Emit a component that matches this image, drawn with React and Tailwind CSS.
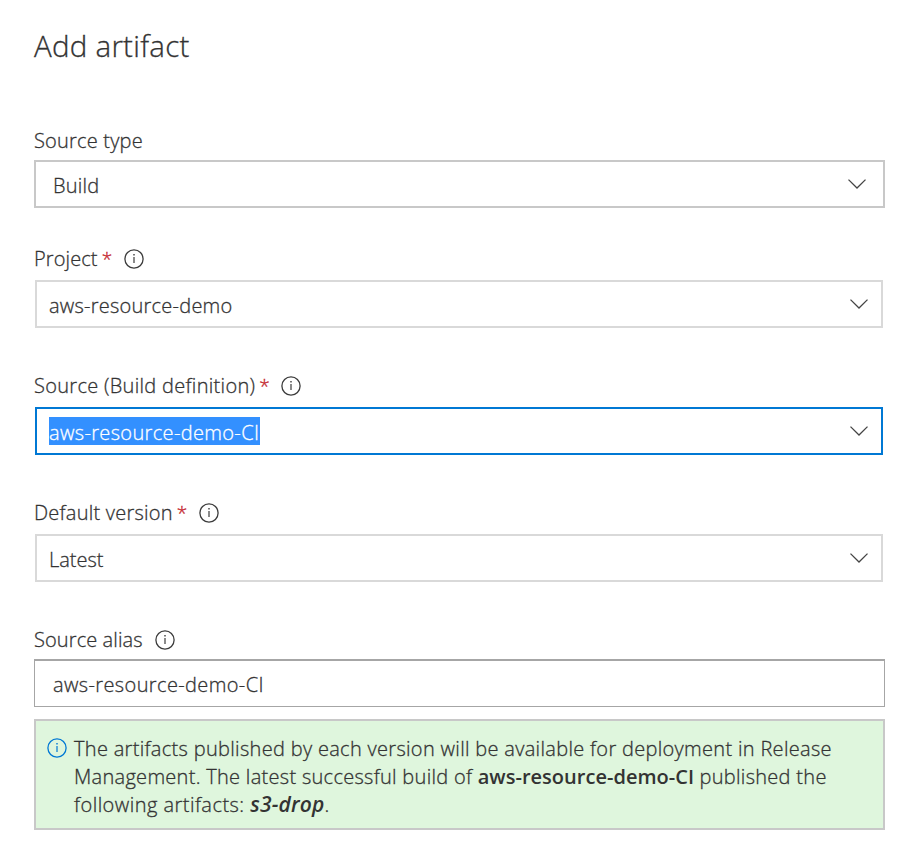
import React from "react";

function InfoIcon({ className }) {
  return (
    <svg viewBox="0 0 20 20" className={`h-5 w-5 shrink-0 ${className}`} fill="none" stroke="currentColor">
      <circle cx="10" cy="10" r="9.1" strokeWidth="1.3" />
      <path d="M10 8V14" strokeWidth="1.2" />
      <path d="M10 5V6.5" strokeWidth="1.4" />
    </svg>
  );
}

function Chevron() {
  return (
    <svg viewBox="0 0 18 10" className="h-2.5 w-[18px] shrink-0" fill="none" stroke="#444" strokeWidth="1.3">
      <path d="M0.5 0.6L9 9L17.5 0.6" />
    </svg>
  );
}

function Label({ text, tracking, required, info }) {
  return (
    <div className="flex h-7 items-center">
      <span className={tracking}>{text}</span>
      {required && <span className="ml-1 w-2 text-[19px] text-[#c4262e]">*</span>}
      {info && <InfoIcon className={required ? "ml-[14px] text-[#3c3c3c]" : "ml-3 text-[#3c3c3c]"} />}
    </div>
  );
}

export default function App() {
  return (
    <main className="h-[854px] w-[913px] bg-white pl-[34px] pt-[26px] font-['Open_Sans',sans-serif] text-[20px] font-light leading-7 text-[#333] [-webkit-text-stroke:0.3px]">
      <h1 className="h-10 text-[29.5px] leading-10 tracking-[0.25px]">Add artifact</h1>

      <section className="mt-[61px] w-[851px]">
        <Label text="Source type" tracking="tracking-[0.2px]" />
        <div className="mt-[5px] flex h-12 justify-between border-2 border-[#c8c8c8] pl-[17px] pr-[17px] pt-2.5">
          <span className="tracking-[0.2px]">Build</span>
          <span className="mt-[7px]"><Chevron /></span>
        </div>
      </section>

      <section className="mt-[37px] w-[849px]">
        <Label text="Project" tracking="tracking-[0.1px]" required info />
        <div className="ml-px mt-[7px] flex h-12 justify-between border-2 border-[#d9d9d9] pl-3 pr-[13px] pt-2.5">
          <span className="tracking-[0.24px]">aws-resource-demo</span>
          <span className="mt-[7px]"><Chevron /></span>
        </div>
      </section>

      <section className="mt-[44px] w-[849px]">
        <Label text="Source (Build definition)" tracking="tracking-[0.3px]" required info />
        <div className="ml-px mt-[7px] flex h-12 justify-between border-2 border-[#0078d4] pl-3 pr-[13px] pt-2">
          <span className="h-7 w-[211px] whitespace-nowrap bg-[#3390ff] pt-0.5 tracking-[0.35px] text-white">aws-resource-demo-CI</span>
          <span className="mt-[9px]"><Chevron /></span>
        </div>
      </section>

      <section className="mt-[44px] w-[849px]">
        <Label text="Default version" tracking="tracking-[0.24px]" required info />
        <div className="ml-px mt-[7px] flex h-12 justify-between border-2 border-[#d9d9d9] pl-3 pr-[13px] pt-2.5">
          <span>Latest</span>
          <span className="mt-[7px]"><Chevron /></span>
        </div>
      </section>

      <section className="mt-[44px] w-[851px]">
        <Label text="Source alias" tracking="tracking-[0.1px]" info />
        <div className="mt-[5px] h-12 border border-t-2 border-[#a6a6a6] pl-[18px] pt-2.5 tracking-[0.38px]">aws-resource-demo-CI</div>
      </section>

      <aside className="mt-3 flex h-[111px] w-[851px] border-2 border-[#c8c8c8] bg-[#dff6dd] pl-[11px] pt-3.5">
        <InfoIcon className="mt-[3px] text-[#0078d4]" />
        <div className="ml-[7px] whitespace-nowrap tracking-[0.31px]">
          <p>The artifacts published by each version will be available for deployment in Release</p>
          <p className="tracking-[0.29px]">Management. The latest successful build of <b className="font-semibold tracking-[0.02px] [-webkit-text-stroke:0px]">aws-resource-demo-CI</b> published the</p>
          <p className="tracking-[0.46px]">following artifacts: <b className="text-[21px] font-semibold italic leading-none tracking-[0.2px] [-webkit-text-stroke:0px]">s3-drop</b>.</p>
        </div>
      </aside>
    </main>
  );
}
